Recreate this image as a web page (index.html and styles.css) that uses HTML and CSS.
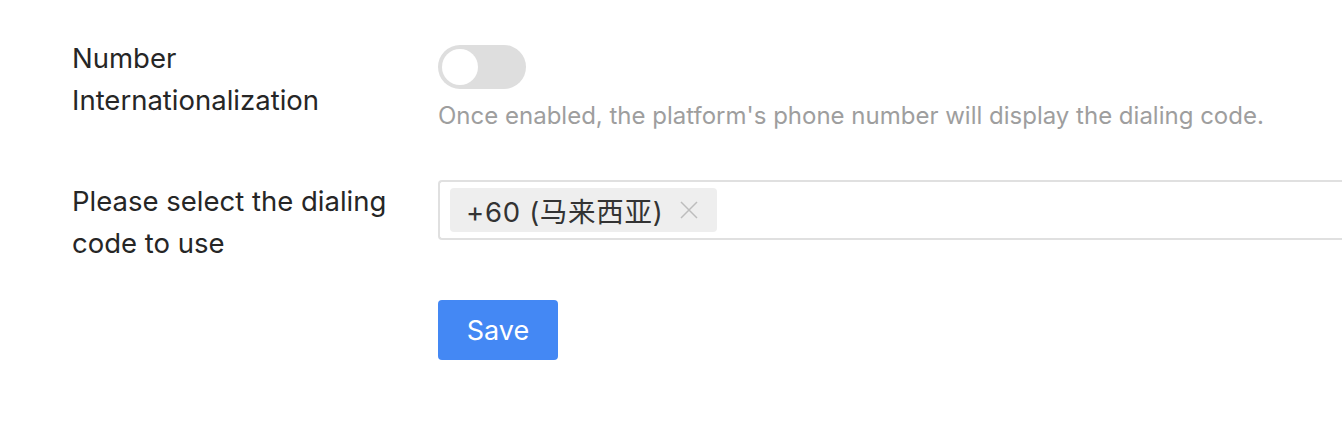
FILE: index.html
```html
<!DOCTYPE html>
<html>
<head>
<meta charset="utf-8">
<link rel="stylesheet" href="styles.css">
</head>
<body>
<div class="form">
  <div class="row row-switch">
    <div class="label">Number<br>Internationalization</div>
    <div class="control">
      <div class="switch"><span class="knob"></span></div>
      <div class="hint">Once enabled, the platform's phone number will display the dialing code.</div>
    </div>
  </div>
  <div class="row row-select">
    <div class="label">Please select the dialing code to use</div>
    <div class="control">
      <div class="select">
        <span class="tag"><span class="tag-text">+60 (马来西亚)</span>
          <svg class="close" width="18" height="18" viewBox="0 0 18 18"><path d="M1 1L17 17M17 1L1 17" stroke="#bdbdbd" stroke-width="1.5" fill="none"/></svg>
        </span>
      </div>
    </div>
  </div>
  <div class="row row-actions">
    <div class="label"></div>
    <div class="control">
      <button class="btn">Save</button>
    </div>
  </div>
</div>
</body>
</html>
```
FILE: styles.css
```css
html, body {
  margin: 0;
  padding: 0;
  background: #fff;
}
body {
  font-family: Inter, "Noto Sans CJK SC", sans-serif;
  color: #262626;
}
.form {
  padding: 37px 0 0 72px;
}
.row {
  display: flex;
}
.label {
  width: 366px;
  flex: none;
  font-size: 27.5px;
  line-height: 42px;
  color: #262626;
  padding-right: 30px;
  box-sizing: border-box;
}
.control {
  flex: 1;
  min-width: 0;
}
.row-switch .control {
  padding-top: 8px;
}
.switch {
  width: 88px;
  height: 44px;
  border-radius: 22px;
  background: #dedede;
  position: relative;
}
.knob {
  position: absolute;
  left: 4px;
  top: 4px;
  width: 36px;
  height: 36px;
  border-radius: 50%;
  background: #fff;
}
.hint {
  margin-top: 12px;
  font-size: 24px;
  line-height: 30px;
  color: #9e9e9e;
}
.row-select {
  margin-top: 49px;
}
.select {
  height: 60px;
  border: 2px solid #e0e0e0;
  border-right: none;
  border-radius: 4px 0 0 4px;
  box-sizing: border-box;
  padding: 6px 10px;
  display: flex;
  align-items: center;
}
.tag {
  height: 44px;
  background: #eeeeee;
  border-radius: 4px;
  display: inline-flex;
  align-items: center;
  padding: 0 19px 0 16px;
  font-size: 27.5px;
  color: #333;
}
.tag-text {
  letter-spacing: 0.7px;
}
.close {
  margin-left: 17px;
}
.row-actions {
  margin-top: 36px;
}
.btn {
  width: 120px;
  height: 60px;
  border: none;
  border-radius: 4px;
  background: #4488f4;
  color: #fff;
  font-family: Inter, sans-serif;
  font-size: 27px;
  padding: 0;
}
```
